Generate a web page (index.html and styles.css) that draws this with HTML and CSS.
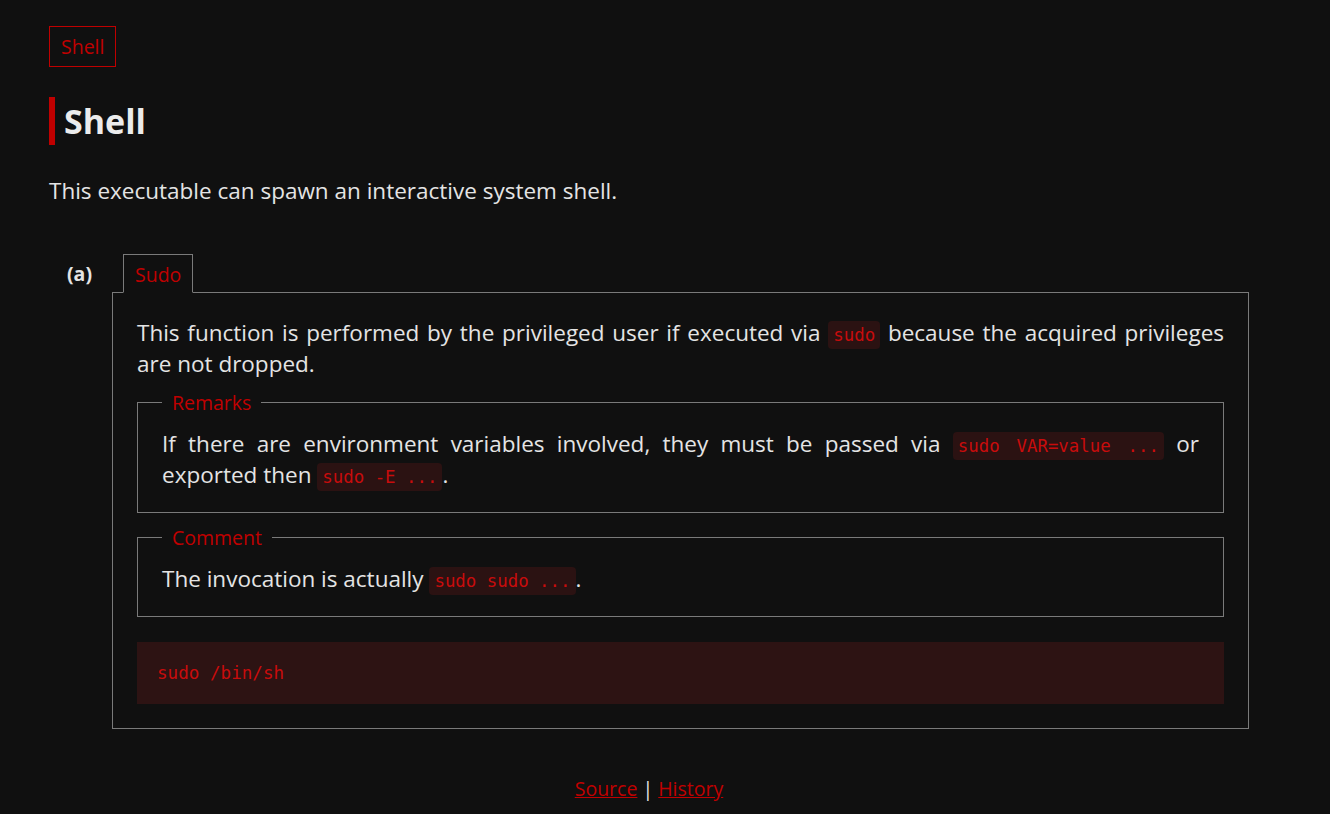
FILE: index.html
```html
<!DOCTYPE html>
<html lang="en">
<head>
<meta charset="utf-8">
<title>Shell</title>
<link rel="stylesheet" href="styles.css">
</head>
<body>
<div class="page">
  <div class="tags"><a class="tag" href="#">Shell</a></div>
  <h1 class="title">Shell</h1>
  <p class="lead">This executable can spawn an interactive system shell.</p>

  <div class="example">
    <div class="tab-row">
      <span class="label">(a)</span>
      <span class="tab">Sudo</span>
    </div>
    <div class="panel">
      <p class="text">This function is performed by the privileged user if executed via <code class="ic">sudo</code> because the acquired privileges are not dropped.</p>
      <fieldset class="box box-remarks">
        <legend class="box-title">Remarks</legend>
        <p class="text">If there are environment variables involved, they must be passed via <code class="ic">sudo VAR=value ...</code> or exported then <code class="ic">sudo -E ...</code>.</p>
      </fieldset>
      <fieldset class="box box-comment">
        <legend class="box-title">Comment</legend>
        <p class="text">The invocation is actually <code class="ic">sudo sudo ...</code>.</p>
      </fieldset>
      <pre class="code">sudo /bin/sh</pre>
    </div>
  </div>

  <div class="footer"><a href="#">Source</a> | <a href="#">History</a></div>
</div>
</body>
</html>
```

FILE: styles.css
```css
html, body {
  margin: 0;
  padding: 0;
  background: #101010;
}
body {
  color: #e4e4e4;
  font-family: "Open Sans", "Noto Sans", sans-serif;
  font-size: 19.5px;
  line-height: 31px;
}
.page {
  width: 1200px;
  margin-left: 49px;
  padding-top: 26px;
}
.tags {
  display: flex;
}
.tag {
  display: inline-block;
  border: 1px solid #c00000;
  color: #c00000;
  padding: 5px 11px;
  line-height: 29px;
  text-decoration: none;
}
.title {
  margin: 30px 0 30px 0;
  border-left: 6px solid #c00000;
  padding-left: 9px;
  font-size: 34px;
  font-weight: 700;
  line-height: 48px;
  color: #ececec;
}
.lead {
  margin: 0;
  font-size: 22.5px;
}
.example {
  margin-top: 48px;
}
.tab-row {
  display: flex;
  align-items: flex-end;
}
.label {
  width: 45px;
  padding-left: 18px;
  font-weight: 700;
  align-self: center;
  line-height: 29px;
}
.tab {
  position: relative;
  z-index: 1;
  margin-left: 11px;
  margin-bottom: -1px;
  border: 1px solid #7a7a7a;
  border-bottom: 1px solid #101010;
  background: #101010;
  color: #c00000;
  padding: 5px 11px 3px 11px;
  line-height: 29px;
}
.panel {
  margin-left: 63px;
  border: 1px solid #7a7a7a;
  padding: 24px;
}
.text {
  margin: 0;
  text-align: justify;
  font-size: 22.5px;
  line-height: 31px;
}
.ic {
  font-family: "DejaVu Sans Mono", "Liberation Mono", monospace;
  font-size: 17.4px;
  line-height: 1;
  color: #c80c0c;
  background: #2b1212;
  border-radius: 4px;
  padding: 4px 5px;
}
.box {
  margin: 0;
  border: 1px solid #7a7a7a;
  padding: 10px 24px 22px 24px;
  min-width: 0;
}
.box-remarks {
  margin-top: 8px;
}
.box-comment {
  margin-top: 9px;
}
.box-title {
  color: #c00000;
  padding: 0 10px;
  line-height: 31px;
}
.code {
  margin: 25px 0 0 0;
  background: #2d1313;
  color: #c80c0c;
  font-family: "DejaVu Sans Mono", "Liberation Mono", monospace;
  font-size: 17.6px;
  line-height: 22px;
  padding: 20px;
}
.footer {
  margin-top: 44px;
  text-align: center;
  padding-bottom: 20px;
}
.footer a {
  color: #c00000;
  text-decoration: underline;
}
```
